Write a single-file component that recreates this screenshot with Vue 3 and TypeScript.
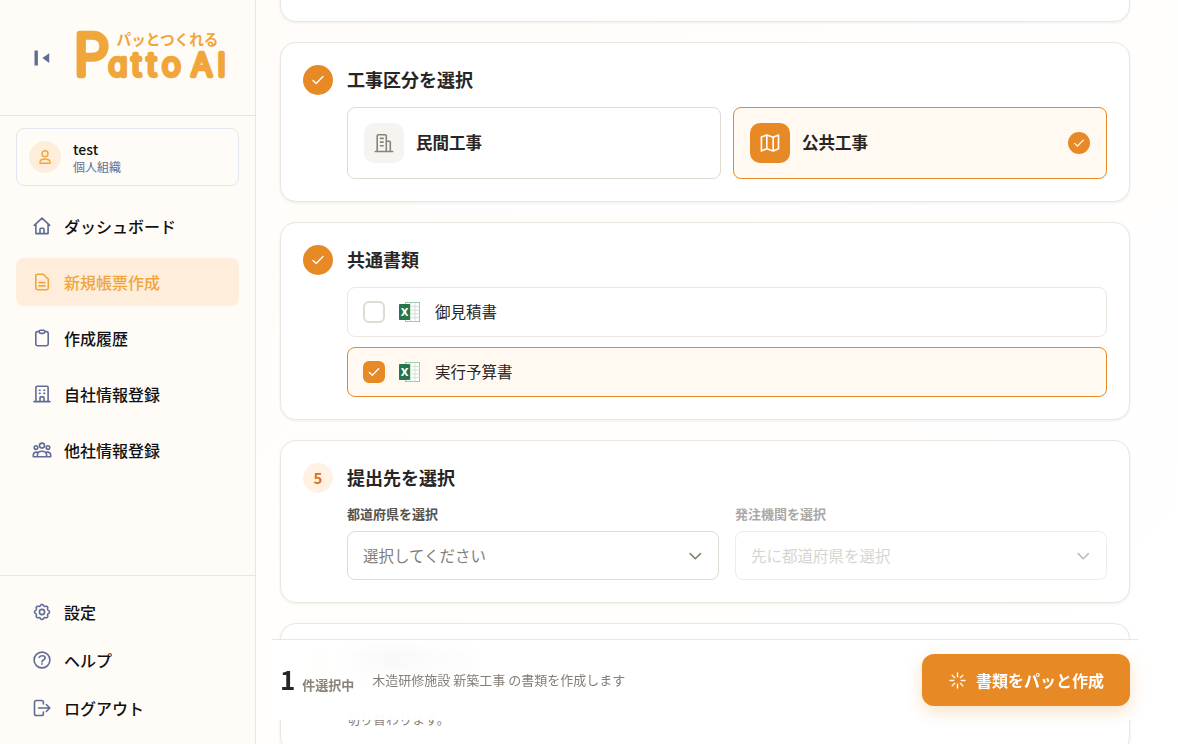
<script setup lang="ts">
import { ref } from 'vue'

interface NavItem {
  label: string
  icon: string
}

const mainNav: NavItem[] = [
  { label: 'ダッシュボード', icon: 'home' },
  { label: '新規帳票作成', icon: 'doc' },
  { label: '作成履歴', icon: 'clip' },
  { label: '自社情報登録', icon: 'building' },
  { label: '他社情報登録', icon: 'people' },
]
const footNav: NavItem[] = [
  { label: '設定', icon: 'gear' },
  { label: 'ヘルプ', icon: 'help' },
  { label: 'ログアウト', icon: 'logout' },
]

// Outline of a cog with eight soft teeth around a round hole.
function cog(): string {
  const points: string[] = []
  for (let i = 0; i < 96; i++) {
    const t = (i / 96) * Math.PI * 2
    const r = 6.85 + 0.65 * Math.tanh(1.8 * Math.cos(8 * t))
    points.push(`${(10 + r * Math.cos(t)).toFixed(2)} ${(10 + r * Math.sin(t)).toFixed(2)}`)
  }
  return `M${points.join('L')}ZM10 7.4a2.6 2.6 0 1 1 0 5.2 2.6 2.6 0 0 1 0-5.2Z`
}

const icons: Record<string, string> = {
  home: 'M2.2 9.3 10 2.2l7.8 7.1M3.9 8v9.6h12.2V8M8 17.4v-4.1c0-.6.4-1 1-1h2c.6 0 1 .4 1 1v4.1',
  doc: 'M5.4 2.2h5.9l5 5v8.9c0 .9-.7 1.6-1.6 1.6H5.4c-.9 0-1.6-.7-1.6-1.6V3.8c0-.9.7-1.6 1.6-1.6ZM7 10.6h6M7 13.9h6',
  clip: 'M7.2 3.6H5.4c-.9 0-1.6.7-1.6 1.6v10.9c0 .9.7 1.6 1.6 1.6h9.2c.9 0 1.6-.7 1.6-1.6V5.2c0-.9-.7-1.6-1.6-1.6h-1.8M8.2 2.2h3.6c.6 0 1 .4 1 1v.6c0 .9-.7 1.6-1.6 1.6H8.8c-.9 0-1.6-.7-1.6-1.6v-.6c0-.6.4-1 1-1Z',
  building: 'M1.9 17.6h16.2M3.9 17.4V3.5c0-.7.5-1.2 1.2-1.2h9.8c.7 0 1.2.5 1.2 1.2v13.9M8 17.4v-3.6c0-.5.4-.9.9-.9h2.2c.5 0 .9.4.9.9v3.6M7.4 6.2h.7M11.9 6.2h.7M7.4 9.4h.7M11.9 9.4h.7',
  people: 'M10 3.1a2.5 2.5 0 1 1 0 5 2.5 2.5 0 0 1 0-5ZM4 5.8a1.8 1.8 0 1 1 0 3.6 1.8 1.8 0 0 1 0-3.6ZM16 5.8a1.8 1.8 0 1 1 0 3.6 1.8 1.8 0 0 1 0-3.6ZM5.4 16.7v-1.4c0-2.2 1.6-4 4.6-4s4.6 1.8 4.6 4v1.4ZM5.6 12.3c-2.8-.6-4.3.9-4.3 2.7v1.7h4.1M14.4 12.3c2.8-.6 4.3.9 4.3 2.7v1.7h-4.1',
  gear: cog(),
  help: 'M10 2.1a7.9 7.9 0 1 1 0 15.8 7.9 7.9 0 0 1 0-15.8ZM7.2 7.3C7.9 6.3 9 5.8 10.3 5.8c1.7 0 2.9.8 2.9 2.1 0 2-3.2 1.7-3.2 4.1M10 13.8v.4',
  logout: 'M11.4 6V4.3c0-1.2-.6-1.8-1.8-1.8H4.3c-1.2 0-1.8.6-1.8 1.8v11.4c0 1.2.6 1.8 1.8 1.8h5.3c1.2 0 1.8-.6 1.8-1.8V14M6.6 10h11.2M14.3 6.5l3.5 3.5-3.5 3.5',
}

const activeNav = ref('doc')
const category = ref<'private' | 'public'>('public')
const documents = ref([
  { name: '御見積書', checked: false },
  { name: '実行予算書', checked: true },
])
</script>

<template>
  <div class="app">
    <aside class="sidebar">
      <div class="brand">
        <svg class="collapse" width="16" height="16" viewBox="0 0 16 16">
          <rect x="0.5" y="0.5" width="3.4" height="15" rx="0.6" />
          <path d="M15.2 3.2v9.8L8.4 8.1Z" />
        </svg>
        <svg class="logo" width="160" height="80" viewBox="0 -12 160 80" aria-label="パッとつくれる Patto AI">
          <text class="mark big" x="0" y="47.6" textLength="35" lengthAdjust="spacingAndGlyphs">P</text>
          <text class="mark" x="34.4 57.8 73 88" y="48.8">atto</text>
          <text class="mark ai" x="117.3 143.4" y="48.8">AI</text>
          <text class="tag" x="42.5" y="18" textLength="102" lengthAdjust="spacingAndGlyphs">パッとつくれる</text>
        </svg>
      </div>

      <div class="account">
        <span class="avatar">
          <svg width="14" height="16" viewBox="0 0 14 16">
            <circle cx="7" cy="4.7" r="3" />
            <path d="M2 14.2v-1c0-2 1.7-3.2 5-3.2s5 1.2 5 3.2v1Z" />
          </svg>
        </span>
        <span class="who"><b>test</b><small>個人組織</small></span>
      </div>

      <nav class="nav">
        <a v-for="n in mainNav" :key="n.icon" :class="{ active: n.icon === activeNav }" @click="activeNav = n.icon">
          <svg width="20" height="20" viewBox="0 0 20 20"><path :d="icons[n.icon]" /></svg>
          <span>{{ n.label }}</span>
        </a>
      </nav>
      <nav class="foot">
        <a v-for="n in footNav" :key="n.icon">
          <svg width="20" height="20" viewBox="0 0 20 20"><path :d="icons[n.icon]" /></svg>
          <span>{{ n.label }}</span>
        </a>
      </nav>
    </aside>

    <main class="main">
      <section class="card stub"></section>

      <section class="card">
        <header>
          <span class="step done"><svg width="14" height="14" viewBox="0 0 14 14"><path d="m2 7.4 3.2 3.2L12 3.6" /></svg></span>
          <h2>工事区分を選択</h2>
        </header>
        <div class="body choices">
          <div class="choice" :class="{ on: category === 'private' }" @click="category = 'private'">
            <span class="tile">
              <svg width="20" height="20" viewBox="0 0 20 20"><path d="M1.3 18.5h17.4M3.2 18.3V2.8c0-.6.4-1 1-1h7.1c.6 0 1 .4 1 1v15.5M12.4 8.2h2.9c.6 0 1 .4 1 1v9.1M6.4 5.4h2.8M6.4 9.1h2.8M6.4 12.8h2.8" /></svg>
            </span>
            <b>民間工事</b>
          </div>
          <div class="choice" :class="{ on: category === 'public' }" @click="category = 'public'">
            <span class="tile">
              <svg width="20" height="20" viewBox="0 0 20 20"><path d="M1.4 4.1 6.8 2l6.4 2.2L18.5 2v13.7l-5.3 2.2-6.4-2.2-5.4 2.2ZM6.8 2v13.7M13.2 4.2v13.7" /></svg>
            </span>
            <b>公共工事</b>
            <span v-if="category === 'public'" class="tick"><svg width="12" height="12" viewBox="0 0 14 14"><path d="m2 7.4 3.2 3.2L12 3.6" /></svg></span>
          </div>
        </div>
      </section>

      <section class="card">
        <header>
          <span class="step done"><svg width="14" height="14" viewBox="0 0 14 14"><path d="m2 7.4 3.2 3.2L12 3.6" /></svg></span>
          <h2>共通書類</h2>
        </header>
        <div class="body docs">
          <div v-for="d in documents" :key="d.name" class="doc" :class="{ on: d.checked }" @click="d.checked = !d.checked">
            <span class="box"><svg v-if="d.checked" width="14" height="14" viewBox="0 0 14 14"><path d="m2.4 7.4 2.9 2.9 6.3-6.5" /></svg></span>
            <svg class="xls" width="22" height="22" viewBox="0 0 22 22">
              <rect x="6.5" y="1.5" width="14" height="19" fill="#fff" stroke="#a3c8ae" />
              <path d="M11.5 2v18M16 2v18M7 5.5h13M7 9.2h13M7 12.9h13M7 16.6h13" stroke="#cfe2d5" fill="none" />
              <rect x="0" y="3" width="11" height="16" rx="0.8" fill="#27754a" />
              <text x="5.7" y="14.6" text-anchor="middle" fill="#fff">X</text>
            </svg>
            <span class="name">{{ d.name }}</span>
          </div>
        </div>
      </section>

      <section class="card">
        <header><span class="step num">5</span><h2>提出先を選択</h2></header>
        <div class="body fields">
          <label class="field">
            <span>都道府県を選択</span>
            <div class="select"><i>選択してください</i><svg width="14" height="14" viewBox="0 0 14 14"><path d="m2.2 4.6 5.1 5.1 5.1-5.1" /></svg></div>
          </label>
          <label class="field off">
            <span>発注機関を選択</span>
            <div class="select"><i>先に都道府県を選択</i><svg width="14" height="14" viewBox="0 0 14 14"><path d="m2.2 4.6 5.1 5.1 5.1-5.1" /></svg></div>
          </label>
        </div>
      </section>

      <section class="card last">
        <header><span class="step num">6</span><h2>工事情報を入力</h2></header>
        <p class="body">切り替わります。</p>
      </section>

      <div class="bar">
        <strong>1</strong><em>件選択中</em>
        <span class="note">木造研修施設 新築工事 の書類を作成します</span>
        <button type="button">
          <svg width="17" height="17" viewBox="0 0 18 18"><path d="M9 1v4M9 13v4M1 9h4M13 9h4M3.3 3.3l2.7 2.7M12 12l2.7 2.7M3.3 14.7 6 12M12 6l2.7-2.7" /></svg>
          書類をパッと作成
        </button>
      </div>
    </main>
  </div>
</template>

<style>
html,
body {
  margin: 0;
  height: 100%;
  overflow: hidden;
}
</style>

<style scoped>
.app {
  display: flex;
  width: 100%;
  height: 744px;
  overflow: hidden;
  font-family: 'Noto Sans CJK JP', 'Noto Sans', sans-serif;
  color: #292524;
  background: linear-gradient(135deg, #fffcf7 0%, #fffefd 50%, #ffffff 100%);
}
* {
  box-sizing: border-box;
}
svg {
  flex: none;
  display: block;
}
path,
circle {
  stroke-linecap: round;
  stroke-linejoin: round;
}
.sidebar {
  width: 256px;
  flex: none;
  display: flex;
  flex-direction: column;
  background: #fffcf7;
  border-right: 1px solid #e2e8f0;
}
.brand {
  height: 116px;
  flex: none;
  display: flex;
  align-items: center;
  padding: 0 0 0 34px;
  gap: 24px;
  border-bottom: 1px solid #e2e6f2;
}
.collapse {
  fill: #5e6c98;
}
.logo {
  margin-top: -5px;
}
.mark {
  font: 300 31.5px Inter, 'Noto Sans CJK JP', sans-serif;
  font-feature-settings: 'cv11' 1;
  fill: #f0a63a;
  stroke: #f0a63a;
  stroke-width: 4.4px;
  stroke-linejoin: round;
}
.mark.big {
  font-size: 56px;
  font-weight: 200;
  stroke-width: 6.6px;
}
.mark.ai {
  font-size: 31px;
}
.tag {
  font: 700 15px 'Noto Sans CJK JP', sans-serif;
  fill: #f0a63a;
}
.account {
  height: 58px;
  margin: 12px 16px 16px;
  padding: 0 12px;
  display: flex;
  align-items: center;
  gap: 12px;
  border: 1px solid #e2e6f2;
  border-radius: 8px;
}
.avatar {
  width: 32px;
  height: 32px;
  border-radius: 50%;
  display: grid;
  place-items: center;
  background: #ffeddb;
}
.avatar svg {
  fill: none;
  stroke: #f0a63a;
  stroke-width: 1.4;
}
.who {
  display: flex;
  flex-direction: column;
}
.who b {
  font-size: 14px;
  font-weight: 500;
  line-height: 18px;
  color: #111;
}
.who small {
  font-size: 12px;
  line-height: 16px;
  padding-top: 1px;
  margin-bottom: -1px;
  color: #5e6c98;
}
.nav {
  display: flex;
  flex-direction: column;
  gap: 8px;
  padding: 0 16px;
  flex: 1;
}
.foot {
  border-top: 1px solid #e2e8f0;
  padding: 12px 16px;
}
.nav a,
.foot a {
  height: 48px;
  display: flex;
  align-items: center;
  gap: 12px;
  padding: 0 16px;
  border-radius: 8px;
  font-size: 16px;
  font-weight: 500;
  color: #111;
}
.nav svg,
.foot svg {
  fill: none;
  stroke: #5e6c98;
  stroke-width: 1.6;
}
.nav a.active {
  background: #ffeddb;
  color: #f0a63a;
}
.nav a.active svg {
  stroke: #f0a63a;
}
.main {
  position: relative;
  flex: 1;
  min-width: 0;
  display: flex;
  flex-direction: column;
  align-items: flex-start;
  gap: 20px;
  padding-left: 24px;
}
.card {
  width: 850px;
  flex: none;
  padding: 22px;
  background: #fff;
  border: 1px solid #ebe7df;
  border-radius: 16px;
  box-shadow: 0 1px 3px rgba(60, 45, 20, 0.08);
}
.card.stub {
  height: 62px;
  margin-top: -40px;
}
.card header {
  display: flex;
  align-items: center;
  gap: 14px;
  height: 30px;
}
.step {
  width: 30px;
  height: 30px;
  flex: none;
  border-radius: 50%;
  display: grid;
  place-items: center;
  background: #fff2e3;
  color: #d9731a;
  font-size: 15px;
  font-weight: 700;
}
.num {
  padding-bottom: 2px;
}
.done,
.tick {
  background: #e78a25;
}
.done svg,
.tick svg,
.box svg {
  fill: none;
  stroke: #fff;
  stroke-width: 1.4;
}
h2 {
  margin: 0;
  font-size: 18px;
  font-weight: 700;
  line-height: 28px;
  padding-bottom: 2px;
}
.body {
  margin: 12px 0 0 44px;
}
.choices {
  display: grid;
  grid-template-columns: 1fr 1fr;
  gap: 12px;
}
.choice {
  height: 72px;
  display: flex;
  align-items: center;
  gap: 12px;
  padding: 0 16px;
  border: 1px solid #dedbd2;
  border-radius: 8px;
  font-size: 16.5px;
}
.choice b,
.name,
.select i,
.note {
  padding-bottom: 2px;
}
.choice.on,
.doc.on {
  border-color: #e78a25;
  background: #fff9f1;
}
.tile {
  width: 40px;
  height: 40px;
  border-radius: 10px;
  display: grid;
  place-items: center;
  background: #f5f4f0;
}
.tile svg {
  fill: none;
  stroke: #8a8378;
  stroke-width: 1.6;
}
.on .tile {
  background: #e78a25;
}
.on .tile svg {
  stroke: #fff;
}
.tick {
  width: 22px;
  height: 22px;
  margin-left: auto;
  border-radius: 50%;
  display: grid;
  place-items: center;
}
.docs {
  display: flex;
  flex-direction: column;
  gap: 10px;
}
.doc {
  height: 50px;
  display: flex;
  align-items: center;
  padding: 0 15px;
  border: 1px solid #ebe7df;
  border-radius: 8px;
  font-size: 15.5px;
}
.box {
  width: 22px;
  height: 22px;
  border: 2px solid #dedbd2;
  border-radius: 6px;
  display: grid;
  place-items: center;
  margin-right: 14px;
}
.on .box {
  background: #e78a25;
  border-color: #e78a25;
}
.xls {
  margin-right: 14px;
}
.xls text {
  font: 700 10px 'DejaVu Sans', sans-serif;
}
.fields {
  display: grid;
  grid-template-columns: 1fr 1fr;
  gap: 16px;
}
.field > span {
  display: block;
  font-size: 13px;
  font-weight: 700;
  line-height: 18px;
  color: #57534e;
  margin-bottom: 8px;
}
.select {
  height: 49px;
  display: flex;
  align-items: center;
  justify-content: space-between;
  padding: 0 16px 0 15px;
  border: 1px solid #dedbd2;
  border-radius: 8px;
  font-size: 15.5px;
  color: #857e77;
}
.select i {
  font-style: normal;
}
.select svg {
  fill: none;
  stroke: #857e72;
  stroke-width: 1.6;
}
.field.off {
  opacity: 0.5;
}
.field.off .select {
  color: #b0aca6;
}
.last p {
  margin-top: 32px;
  font-size: 13px;
  line-height: 22px;
  color: #8a8378;
}
.bar {
  position: absolute;
  left: 16px;
  top: 639px;
  width: 866px;
  height: 81px;
  display: flex;
  align-items: center;
  padding: 0 8px;
  border-top: 1px solid #ebe7df;
  background: rgba(255, 255, 255, 0.92);
  backdrop-filter: blur(12px);
}
.bar strong {
  font-size: 26px;
  line-height: 38px;
  padding-bottom: 2px;
}
.bar em {
  margin: 8px 18px 0 7px;
  font-style: normal;
  font-size: 13px;
  font-weight: 700;
  color: #8a8378;
}
.note {
  font-size: 13px;
  color: #857e77;
}
.bar button {
  margin-left: auto;
  width: 208px;
  height: 52px;
  display: flex;
  align-items: center;
  justify-content: center;
  gap: 10px;
  padding: 0 0 0 1px;
  border: 0;
  border-radius: 12px;
  background: #e78a25;
  box-shadow: 0 6px 16px rgba(231, 138, 37, 0.25);
  color: #fff;
  font: 700 16px 'Noto Sans CJK JP', sans-serif;
}
.bar button svg {
  fill: none;
  stroke: #fff;
  stroke-width: 1.4;
}
</style>
